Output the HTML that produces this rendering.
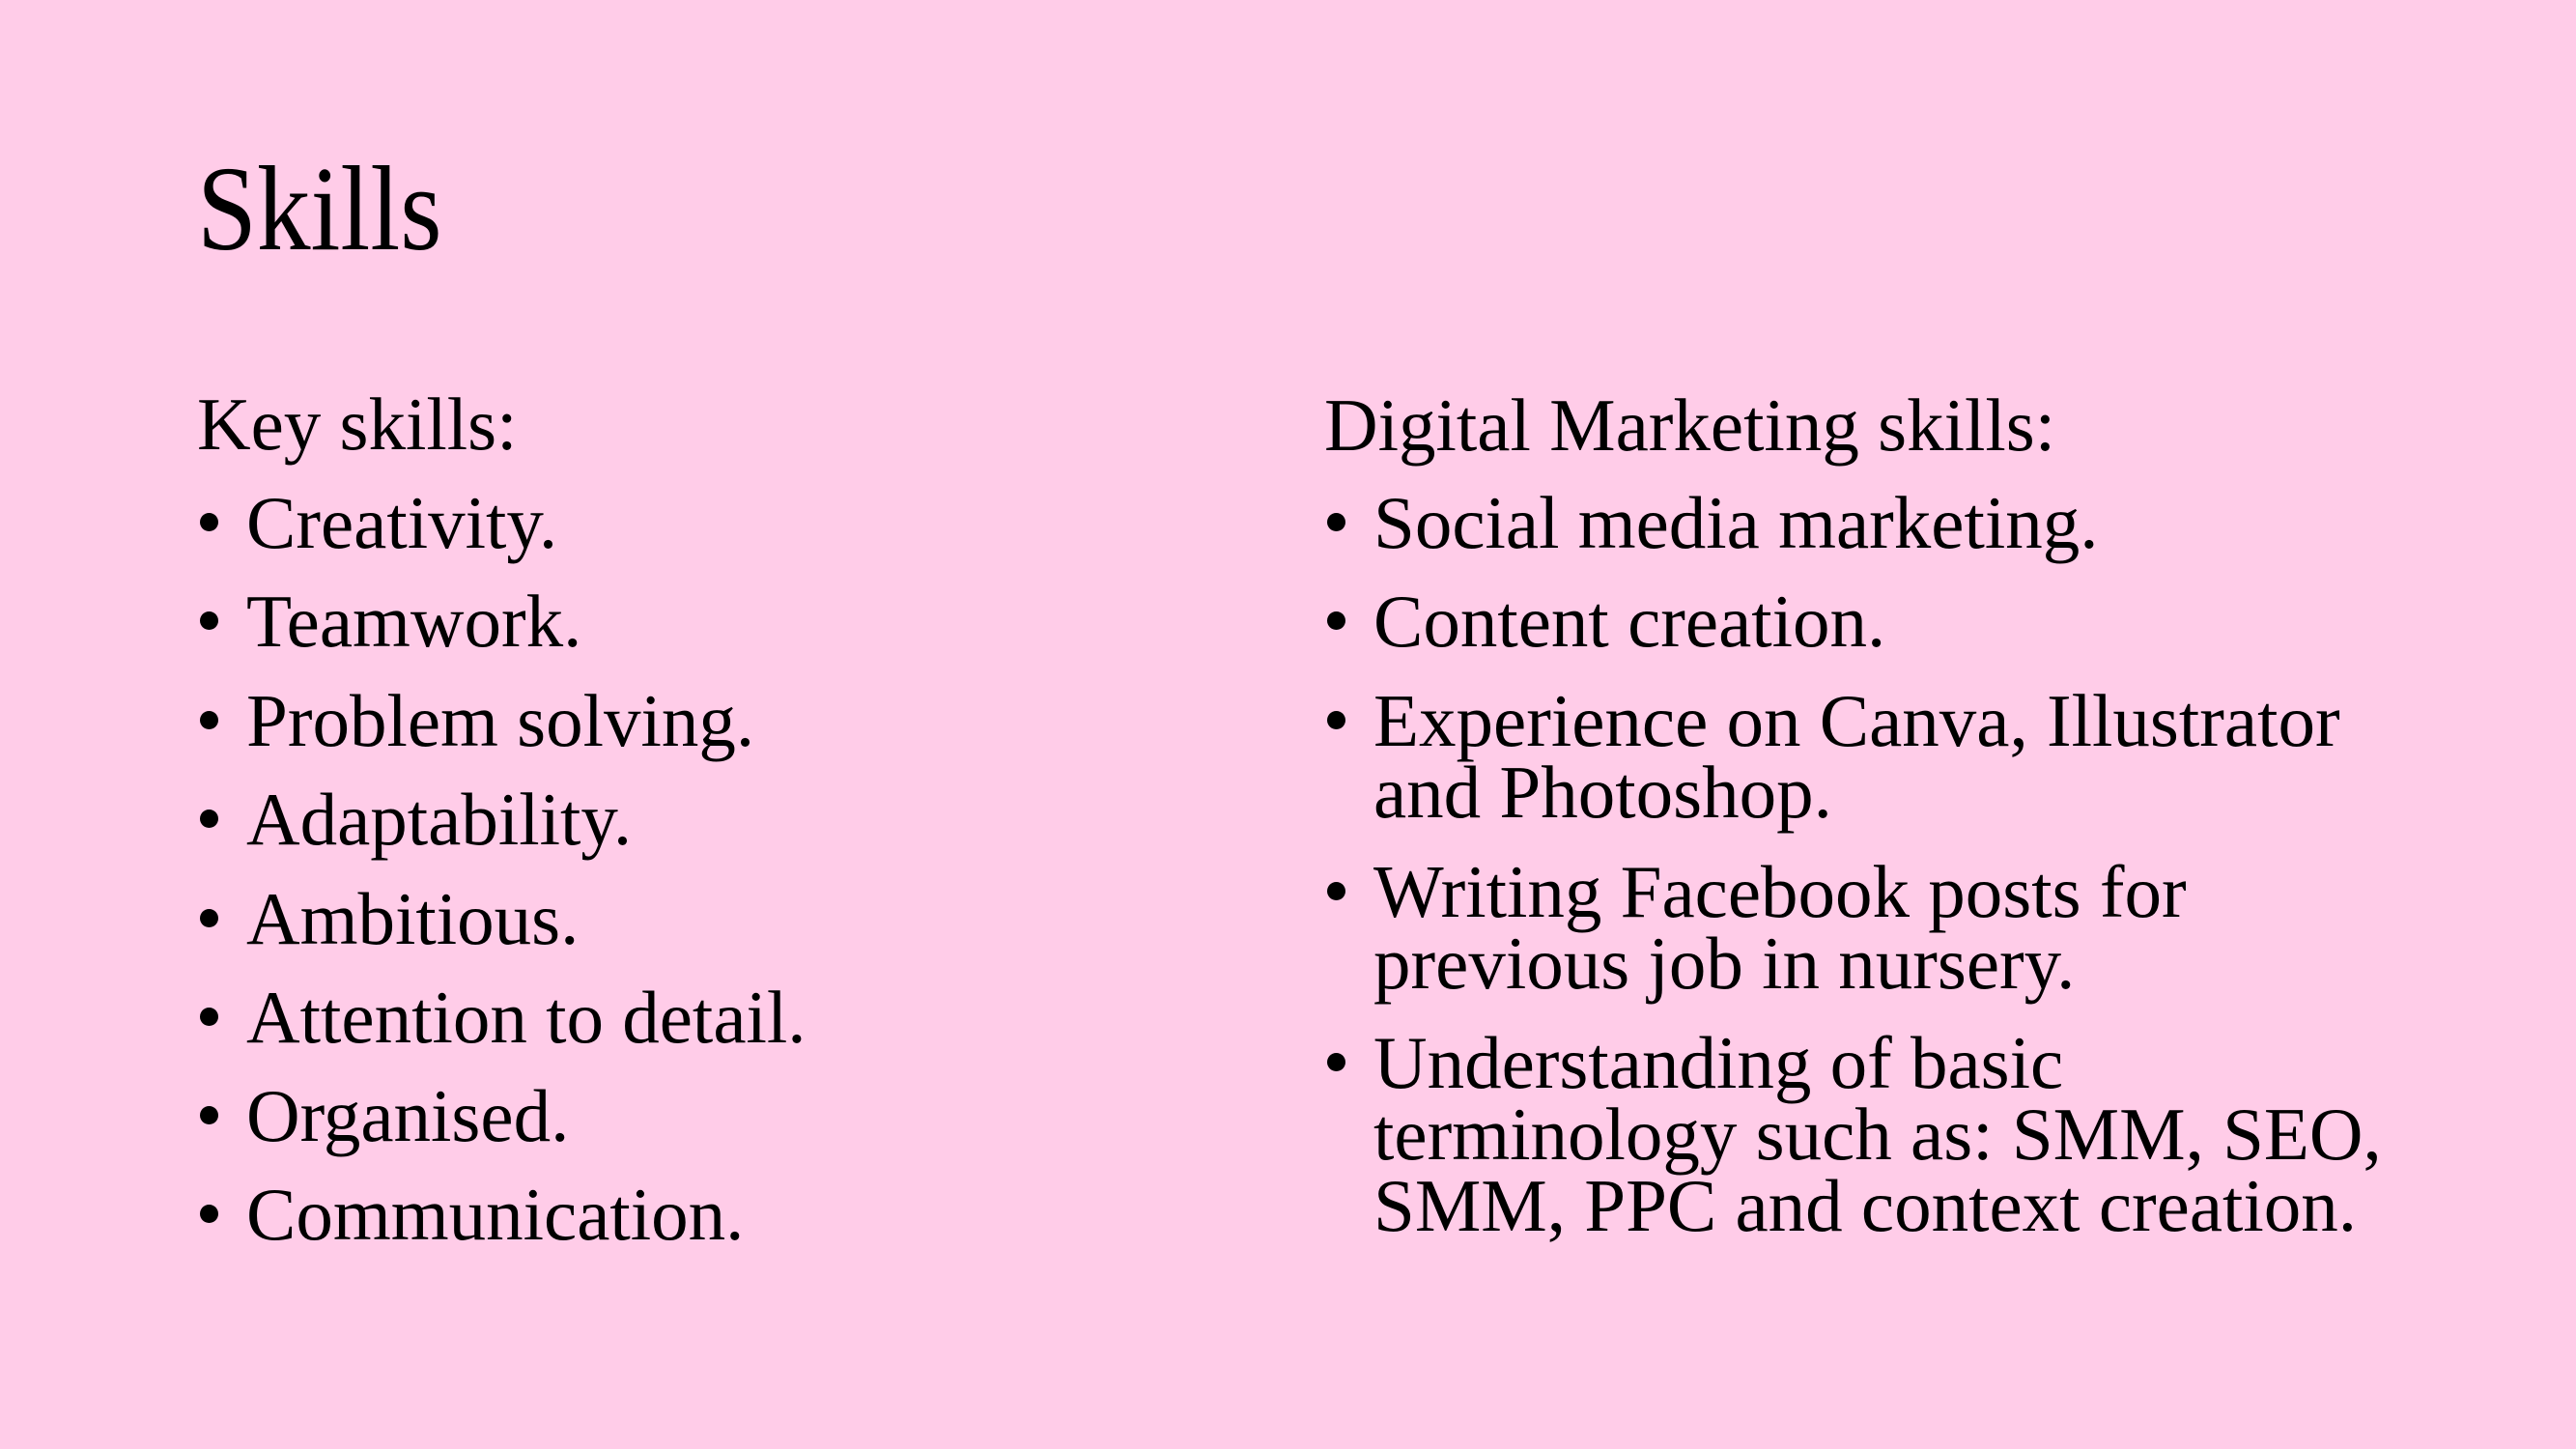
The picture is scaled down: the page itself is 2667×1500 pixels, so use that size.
<!DOCTYPE html>
<html><head><meta charset="utf-8"><style>
html,body{margin:0;padding:0}
body{width:2667px;height:1500px;background:#FFCCE8;position:relative;overflow:hidden;font-family:"Liberation Serif",serif;color:#000}
.t{position:absolute;white-space:nowrap;line-height:1;font-size:77px;margin-top:2px}
.h{position:absolute;white-space:nowrap;line-height:1;font-size:125px;transform:scaleX(0.89);transform-origin:0 0;left:204px;top:155px}
.b{position:absolute;width:19px;height:19px;border-radius:50%;background:#000;margin-top:-1px}
</style></head><body>
<div class="h">Skills</div>

<div class="t" style="left:204px;top:399px">Key skills:</div>
<div class="b" style="left:207px;top:532px"></div><div class="t" style="left:255px;top:501px">Creativity.</div>
<div class="b" style="left:207px;top:634px"></div><div class="t" style="left:255px;top:603px">Teamwork.</div>
<div class="b" style="left:207px;top:737px"></div><div class="t" style="left:255px;top:706px">Problem solving.</div>
<div class="b" style="left:207px;top:839px"></div><div class="t" style="left:255px;top:808px">Adaptability.</div>
<div class="b" style="left:207px;top:942px"></div><div class="t" style="left:255px;top:911px">Ambitious.</div>
<div class="b" style="left:207px;top:1044px"></div><div class="t" style="left:255px;top:1013px">Attention to detail.</div>
<div class="b" style="left:207px;top:1146px"></div><div class="t" style="left:255px;top:1115px">Organised.</div>
<div class="b" style="left:207px;top:1248px"></div><div class="t" style="left:255px;top:1217px">Communication.</div>

<div class="t" style="left:1371px;top:400px">Digital Marketing skills:</div>
<div class="b" style="left:1374px;top:532px"></div><div class="t" style="left:1422px;top:501px">Social media marketing.</div>
<div class="b" style="left:1374px;top:634px"></div><div class="t" style="left:1422px;top:603px">Content creation.</div>
<div class="b" style="left:1374px;top:737px"></div><div class="t" style="left:1422px;top:706px">Experience on Canva, Illustrator</div>
<div class="t" style="left:1422px;top:780px">and Photoshop.</div>
<div class="b" style="left:1374px;top:914px"></div><div class="t" style="left:1422px;top:883px">Writing Facebook posts for</div>
<div class="t" style="left:1422px;top:957px">previous job in nursery.</div>
<div class="b" style="left:1374px;top:1091px"></div><div class="t" style="left:1422px;top:1060px">Understanding of basic</div>
<div class="t" style="left:1422px;top:1134px">terminology such as: SMM, SEO,</div>
<div class="t" style="left:1422px;top:1208px">SMM, PPC and context creation.</div>
</body></html>
